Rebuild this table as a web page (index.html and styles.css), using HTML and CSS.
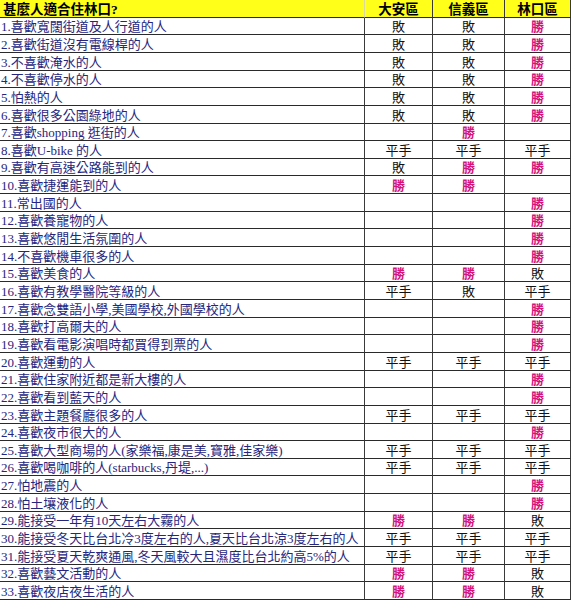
FILE: index.html
```html
<!DOCTYPE html>
<html lang="zh-Hant">
<head>
<meta charset="utf-8">
<title>甚麼人適合住林口?</title>
<link rel="stylesheet" href="styles.css">
</head>
<body>
<div class="sheet">
  <div class="hd q">甚麼人適合住林口?</div><div class="hd v">大安區</div><div class="hd v">信義區</div><div class="hd v">林口區</div>
  <div class="q">1.喜歡寬闊街道及人行道的人</div><div class="v lose">敗</div><div class="v lose">敗</div><div class="v win">勝</div>
  <div class="q">2.喜歡街道沒有電線桿的人</div><div class="v lose">敗</div><div class="v lose">敗</div><div class="v win">勝</div>
  <div class="q">3.不喜歡淹水的人</div><div class="v lose">敗</div><div class="v lose">敗</div><div class="v win">勝</div>
  <div class="q">4.不喜歡停水的人</div><div class="v lose">敗</div><div class="v lose">敗</div><div class="v win">勝</div>
  <div class="q">5.怕熱的人</div><div class="v lose">敗</div><div class="v lose">敗</div><div class="v win">勝</div>
  <div class="q">6.喜歡很多公園綠地的人</div><div class="v lose">敗</div><div class="v lose">敗</div><div class="v win">勝</div>
  <div class="q">7.喜歡shopping 逛街的人</div><div class="v"></div><div class="v win">勝</div><div class="v"></div>
  <div class="q">8.喜歡U-bike 的人</div><div class="v">平手</div><div class="v">平手</div><div class="v">平手</div>
  <div class="q">9.喜歡有高速公路能到的人</div><div class="v lose">敗</div><div class="v win">勝</div><div class="v win">勝</div>
  <div class="q">10.喜歡捷運能到的人</div><div class="v win">勝</div><div class="v win">勝</div><div class="v"></div>
  <div class="q">11.常出國的人</div><div class="v"></div><div class="v"></div><div class="v win">勝</div>
  <div class="q">12.喜歡養寵物的人</div><div class="v"></div><div class="v"></div><div class="v win">勝</div>
  <div class="q">13.喜歡悠閒生活氛圍的人</div><div class="v"></div><div class="v"></div><div class="v win">勝</div>
  <div class="q">14.不喜歡機車很多的人</div><div class="v"></div><div class="v"></div><div class="v win">勝</div>
  <div class="q">15.喜歡美食的人</div><div class="v win">勝</div><div class="v win">勝</div><div class="v lose">敗</div>
  <div class="q">16.喜歡有教學醫院等級的人</div><div class="v">平手</div><div class="v lose">敗</div><div class="v">平手</div>
  <div class="q">17.喜歡念雙語小學,美國學校,外國學校的人</div><div class="v"></div><div class="v"></div><div class="v win">勝</div>
  <div class="q">18.喜歡打高爾夫的人</div><div class="v"></div><div class="v"></div><div class="v win">勝</div>
  <div class="q">19.喜歡看電影演唱時都買得到票的人</div><div class="v"></div><div class="v"></div><div class="v win">勝</div>
  <div class="q">20.喜歡運動的人</div><div class="v">平手</div><div class="v">平手</div><div class="v">平手</div>
  <div class="q">21.喜歡住家附近都是新大樓的人</div><div class="v"></div><div class="v"></div><div class="v win">勝</div>
  <div class="q">22.喜歡看到藍天的人</div><div class="v"></div><div class="v"></div><div class="v win">勝</div>
  <div class="q">23.喜歡主題餐廳很多的人</div><div class="v">平手</div><div class="v">平手</div><div class="v">平手</div>
  <div class="q">24.喜歡夜市很大的人</div><div class="v"></div><div class="v"></div><div class="v win">勝</div>
  <div class="q">25.喜歡大型商場的人(家樂福,康是美,寶雅,佳家樂)</div><div class="v">平手</div><div class="v">平手</div><div class="v">平手</div>
  <div class="q">26.喜歡喝咖啡的人(starbucks,丹堤,...)</div><div class="v">平手</div><div class="v">平手</div><div class="v">平手</div>
  <div class="q">27.怕地震的人</div><div class="v"></div><div class="v"></div><div class="v win">勝</div>
  <div class="q">28.怕土壤液化的人</div><div class="v"></div><div class="v"></div><div class="v win">勝</div>
  <div class="q">29.能接受一年有10天左右大霧的人</div><div class="v win">勝</div><div class="v win">勝</div><div class="v lose">敗</div>
  <div class="q">30.能接受冬天比台北冷3度左右的人,夏天比台北涼3度左右的人</div><div class="v">平手</div><div class="v">平手</div><div class="v">平手</div>
  <div class="q">31.能接受夏天乾爽通風,冬天風較大且濕度比台北約高5%的人</div><div class="v">平手</div><div class="v">平手</div><div class="v">平手</div>
  <div class="q">32.喜歡藝文活動的人</div><div class="v win">勝</div><div class="v win">勝</div><div class="v lose">敗</div>
  <div class="q">33.喜歡夜店夜生活的人</div><div class="v win">勝</div><div class="v win">勝</div><div class="v lose">敗</div>
</div>
</body>
</html>
```

FILE: styles.css
```css
html, body {
  margin: 0;
  padding: 0;
  background: #ffffff;
}

.sheet {
  width: 571px;
  height: 600px;
  display: grid;
  grid-template-columns: 365px 68px 72px 66px;
  grid-template-rows: repeat(34, 1fr);
  font-family: "Liberation Serif", "Noto Sans CJK TC", serif;
  font-size: 13px;
  line-height: 15px;
  overflow: hidden;
}

.sheet > div {
  border-bottom: 1px solid #2a2a2a;
  border-right: 1px solid #3a3a3a;
  display: flex;
  align-items: flex-end;
  white-space: nowrap;
  overflow: hidden;
}

.q {
  color: #26267e;
  padding-left: 1px;
}

.v {
  justify-content: center;
  color: #111111;
}

.hd {
  background: #ffff1a;
  color: #000000;
  font-weight: bold;
  font-size: 13.5px;
}

.hd.q {
  padding-left: 3px;
  border-right-color: #d8d8a0;
}

.win {
  color: #d4137c;
  font-weight: bold;
}

.lose {
  color: #111111;
}
```
